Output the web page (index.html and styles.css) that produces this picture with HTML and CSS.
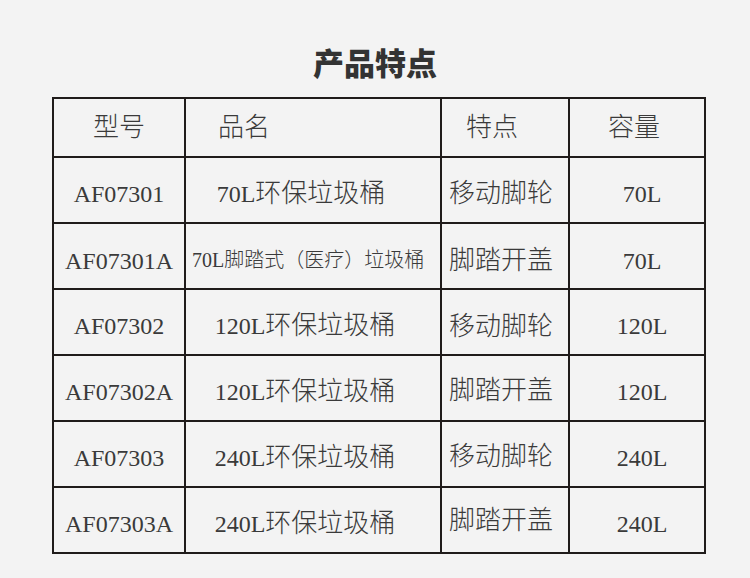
FILE: index.html
```html
<!DOCTYPE html>
<html lang="zh-CN">
<head>
<meta charset="utf-8">
<title>产品特点</title>
<link rel="stylesheet" href="styles.css">
</head>
<body>
<div class="page">
  <h1 class="title">产品特点</h1>
  <table class="spec">
    <colgroup>
      <col class="c1"><col class="c2"><col class="c3"><col class="c4">
    </colgroup>
    <thead>
      <tr class="head">
        <th class="model cn">型号</th>
        <th class="name name-head cn">品名</th>
        <th class="feat feat-head cn">特点</th>
        <th class="cap cap-head cn">容量</th>
      </tr>
    </thead>
    <tbody>
      <tr><td class="model">AF07301</td><td class="name n70">70L<span class="cn">环保垃圾桶</span></td><td class="feat cn">移动脚轮</td><td class="cap">70L</td></tr>
      <tr><td class="model low">AF07301A</td><td class="name small">70L脚踏式（医疗）垃圾桶</td><td class="feat cn low">脚踏开盖</td><td class="cap low">70L</td></tr>
      <tr><td class="model">AF07302</td><td class="name">120L<span class="cn">环保垃圾桶</span></td><td class="feat cn low">移动脚轮</td><td class="cap">120L</td></tr>
      <tr><td class="model">AF07302A</td><td class="name">120L<span class="cn">环保垃圾桶</span></td><td class="feat cn mid">脚踏开盖</td><td class="cap">120L</td></tr>
      <tr><td class="model">AF07303</td><td class="name">240L<span class="cn">环保垃圾桶</span></td><td class="feat cn mid">移动脚轮</td><td class="cap">240L</td></tr>
      <tr><td class="model">AF07303A</td><td class="name">240L<span class="cn">环保垃圾桶</span></td><td class="feat cn up">脚踏开盖</td><td class="cap">240L</td></tr>
    </tbody>
  </table>
</div>
</body>
</html>
```

FILE: styles.css
```css
html, body {
  margin: 0;
  padding: 0;
  background: #f3f3f3;
}
.page {
  width: 750px;
  height: 578px;
  padding-top: 41px;
  box-sizing: border-box;
  font-family: "Liberation Serif", "Noto Sans CJK SC", serif;
  color: #3a3a3a;
}
.title {
  margin: 0;
  text-align: center;
  font-family: "Noto Sans CJK SC", sans-serif;
  font-weight: 900;
  font-size: 31px;
  line-height: 42px;
  color: #333;
}
.spec {
  margin: 14px 0 0 52px;
  border-collapse: collapse;
  table-layout: fixed;
  width: 652px;
  border: 2px solid #1f1b1a;
}
.c1 { width: 132px; }
.c2 { width: 256px; }
.c3 { width: 128px; }
.c4 { width: 136px; }
.spec th, .spec td {
  border: 2px solid #1f1b1a;
  padding: 0;
  font-weight: 300;
  font-size: 24px;
  line-height: 30px;
  text-align: center;
  white-space: nowrap;
  color: #3a3a3a;
}
.spec .cn {
  font-size: 26px;
}
.spec th {
  height: 57px;
}
.spec td {
  height: 56px;
  padding-top: 8px;
  vertical-align: middle;
}
.spec td.low {
  height: 54px;
  padding-top: 10px;
}
.spec td.mid {
  height: 59px;
  padding-top: 5px;
}
.spec td.up {
  height: 62px;
  padding-top: 2px;
}
.spec .name { padding-right: 16px; }
.spec .name.n70 { padding-right: 24px; }
.spec .name-head {
  text-align: left;
  padding-left: 32px;
  padding-right: 0;
}
.spec .name.small {
  font-size: 20px;
  padding-right: 0;
  padding-left: 6px;
  text-align: left;
}
.spec .feat { padding-right: 8px; }
.spec .feat-head { padding-right: 26px; }
.spec .cap { padding-left: 10px; }
.spec .cap-head { padding-left: 0; padding-right: 6px; }
```
